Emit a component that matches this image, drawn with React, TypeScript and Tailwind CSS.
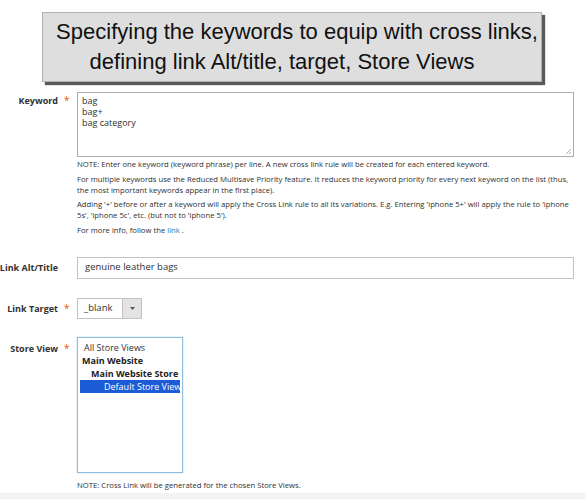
import { ReactNode } from "react";

function Label({ text, required }: { text: string; required?: boolean }) {
  return (
    <div className="flex items-center w-[77px] shrink-0 h-[13px]">
      <div className="w-[58px] flex justify-end whitespace-nowrap font-bold text-[9px] leading-[13px] text-[#303030]">
        {text}
      </div>
      <div className="w-[19px] pl-[6px] text-[10px] leading-[13px] text-[#eb5202]">{required ? "*" : null}</div>
    </div>
  );
}

function Note({ children }: { children: ReactNode }) {
  return <p className="text-[7.7px] leading-[11px] text-[#303030]">{children}</p>;
}

export default function App() {
  return (
    <div className="relative w-[585px] h-[499px] bg-white overflow-hidden font-['Open_Sans',sans-serif] text-[#303030]">
      <div className="ml-[42px] mt-[12px] w-[500px] h-[70px] bg-[#dedede] border border-[#b0b0b0] shadow-[3px_3px_1px_#5a5a5a] flex flex-col items-center justify-center font-['Liberation_Sans',Arial,sans-serif] text-[22px] leading-[30px] text-[#111]">
        <div className="pl-[10px] whitespace-nowrap">Specifying the keywords to equip with cross links,</div>
        <div className="pr-[20px] whitespace-nowrap">defining link Alt/title, target, Store Views</div>
      </div>

      {/* Keyword */}
      <div className="flex mt-[10px]">
        <div className="pt-[2px]">
          <Label text="Keyword" required />
        </div>
        <div className="w-[497px]">
          <div className="relative h-[65px] border border-[#adadad] px-[4px] pt-[2px] text-[9px] leading-[11px] text-[#303030]">
            <div>bag</div>
            <div>bag+</div>
            <div>bag category</div>
            <svg className="absolute right-[1px] bottom-[1px]" width="7" height="7" viewBox="0 0 7 7">
              <path d="M6 1 L1 6 M6 4 L4 6" stroke="#9a9a9a" strokeWidth="0.8" />
            </svg>
          </div>
          <div className="mt-[2px] flex flex-col gap-[3.5px]">
            <Note>NOTE: Enter one keyword (keyword phrase) per line. A new cross link rule will be created for each entered keyword.</Note>
            <Note>
              For multiple keywords use the Reduced Multisave Priority feature. It reduces the keyword priority for every next keyword on the list (thus,
              the most important keywords appear in the first place).
            </Note>
            <Note>
              Adding '+' before or after a keyword will apply the Cross Link rule to all its variations. E.g. Entering 'iphone 5+' will apply the rule to 'iphone
              5s', 'iphone 5c', etc. (but not to 'iphone 5').
            </Note>
            <Note>
              For more info, follow the <span className="text-[#1979c3]">link</span> .
            </Note>
          </div>
        </div>
      </div>

      {/* Link Alt/Title */}
      <div className="flex items-center mt-[21px]">
        <Label text="Link Alt/Title" />
        <div className="w-[497px] h-[22px] border border-[#c2c2c2] flex items-center px-[7px] text-[9.5px]">
          genuine leather bags
        </div>
      </div>

      {/* Link Target */}
      <div className="flex items-center mt-[19px]">
        <Label text="Link Target" required />
        <div className="flex h-[21px] w-[65px] border border-[#c2c2c2]">
          <div className="flex-1 flex items-center pl-[6px] text-[9.5px]">_blank</div>
          <div className="w-[19px] bg-[#e3e3e3] border-l border-[#c2c2c2] flex items-center justify-center">
            <svg width="5" height="3" viewBox="0 0 5 3">
              <path d="M0 0 H5 L2.5 3 Z" fill="#555" />
            </svg>
          </div>
        </div>
      </div>

      {/* Store View */}
      <div className="flex mt-[18px]">
        <div className="pt-[5.5px]">
          <Label text="Store View" required />
        </div>
        <div>
          <div className="w-[106px] h-[136px] border border-[#8fbde0] shadow-[0_0_2px_#b8d8f0] pt-[3px] px-[2px] text-[9px] leading-[13px]">
            <div className="pl-[4px] text-[#333]">All Store Views</div>
            <div className="pl-[2px] font-bold text-[#222]">Main Website</div>
            <div className="pl-[11px] font-bold text-[#222]">Main Website Store</div>
            <div className="pl-[24px] bg-[#1c5bd6] text-white whitespace-nowrap overflow-hidden">Default Store View</div>
          </div>
          <div className="mt-[7px]">
            <Note>NOTE: Cross Link will be generated for the chosen Store Views.</Note>
          </div>
        </div>
      </div>

      <div className="absolute left-0 right-0 bottom-0 h-[6px] bg-[#f3f3f3]" />
    </div>
  );
}
